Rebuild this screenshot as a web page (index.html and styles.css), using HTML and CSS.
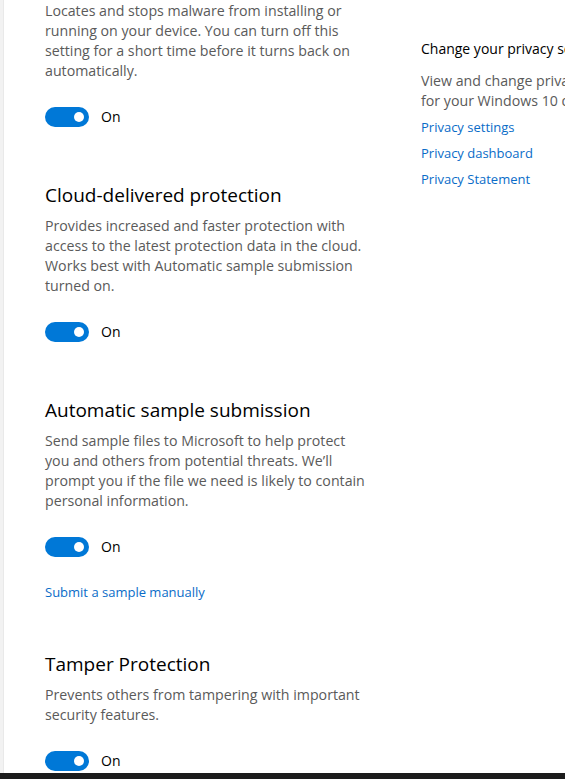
FILE: index.html
```html
<!DOCTYPE html>
<html lang="en">
<head>
<meta charset="utf-8">
<title>Virus &amp; threat protection settings</title>
<link rel="stylesheet" href="styles.css">
</head>
<body>
<div class="window">
  <div class="rail"></div>
  <div class="content">
    <main class="main">
      <section class="setting first">
        <p class="desc">Locates and stops malware from installing or running on your device. You can turn off this setting for a short time before it turns back on automatically.</p>
        <div class="toggle-row"><span class="toggle"><span class="knob"></span></span><span class="state">On</span></div>
      </section>
      <section class="setting">
        <h2 class="title">Cloud-delivered protection</h2>
        <p class="desc">Provides increased and faster protection with access to the latest protection data in the cloud. Works best with Automatic sample submission turned on.</p>
        <div class="toggle-row"><span class="toggle"><span class="knob"></span></span><span class="state">On</span></div>
      </section>
      <section class="setting">
        <h2 class="title">Automatic sample submission</h2>
        <p class="desc">Send sample files to Microsoft to help protect you and others from potential threats. We’ll prompt you if the file we need is likely to contain personal information.</p>
        <div class="toggle-row"><span class="toggle"><span class="knob"></span></span><span class="state">On</span></div>
        <a class="link sample-link" href="#">Submit a sample manually</a>
      </section>
      <section class="setting tamper">
        <h2 class="title">Tamper Protection</h2>
        <p class="desc">Prevents others from tampering with important security features.</p>
        <div class="toggle-row"><span class="toggle"><span class="knob"></span></span><span class="state">On</span></div>
      </section>
    </main>
    <aside class="side">
      <h3 class="side-title">Change your privacy settings</h3>
      <p class="side-desc">View and change privacy settings for your Windows 10 device.</p>
      <a class="link side-link" href="#">Privacy settings</a>
      <a class="link side-link" href="#">Privacy dashboard</a>
      <a class="link side-link" href="#">Privacy Statement</a>
    </aside>
  </div>
</div>
<div class="taskbar"></div>
</body>
</html>
```
FILE: styles.css
```css
html, body {
  margin: 0;
  padding: 0;
}
body {
  width: 565px;
  height: 779px;
  overflow: hidden;
  display: flex;
  flex-direction: column;
  background: #ffffff;
  font-family: "Open Sans", "Noto Sans", sans-serif;
  color: #000;
}
.window {
  flex: 1;
  display: flex;
  min-height: 0;
}
.rail {
  width: 4px;
  flex-shrink: 0;
  background: #f2f2f2;
  border-right: 1px solid #e9e9e9;
  box-sizing: border-box;
}
.content {
  display: flex;
  padding-left: 41px;
  min-width: 0;
}
.main {
  width: 325px;
  flex-shrink: 0;
  display: flex;
  flex-direction: column;
}
.setting {
  display: flex;
  flex-direction: column;
  align-items: flex-start;
  margin-top: 54px;
}
.setting.first {
  margin-top: 1px;
}
.setting.tamper {
  margin-top: 48px;
}
.title {
  margin: 0 0 7px;
  font-size: 19px;
  font-weight: 400;
  line-height: 28px;
  color: #000;
}
.desc {
  margin: 0;
  font-size: 14.2px;
  line-height: 20px;
  color: #5a5a5a;
}
.toggle-row {
  display: flex;
  align-items: center;
  gap: 12px;
  margin-top: 26px;
  height: 20px;
}
.toggle {
  width: 44px;
  height: 20px;
  border-radius: 10px;
  background: #0078d7;
  display: flex;
  align-items: center;
  justify-content: flex-end;
  padding-right: 5px;
  box-sizing: border-box;
}
.knob {
  width: 10px;
  height: 10px;
  border-radius: 50%;
  background: #fff;
}
.state {
  font-size: 14px;
  line-height: 20px;
  color: #000;
}
.link {
  color: #0a6cc8;
  text-decoration: none;
  font-size: 13px;
  line-height: 20px;
}
.sample-link {
  margin-top: 25px;
}
.side {
  width: 260px;
  flex-shrink: 0;
  margin-left: 51px;
  display: flex;
  flex-direction: column;
  align-items: flex-start;
  padding-top: 39px;
}
.side-title {
  margin: 0;
  font-size: 14px;
  font-weight: 400;
  line-height: 20px;
  color: #000;
}
.side-desc {
  margin: 12px 0 0;
  width: 222px;
  font-size: 14.2px;
  line-height: 20px;
  color: #5a5a5a;
}
.side-link {
  margin-top: 6px;
  font-size: 13px;
}
.taskbar {
  height: 6px;
  flex-shrink: 0;
  background: #1c1c1c;
}
```
